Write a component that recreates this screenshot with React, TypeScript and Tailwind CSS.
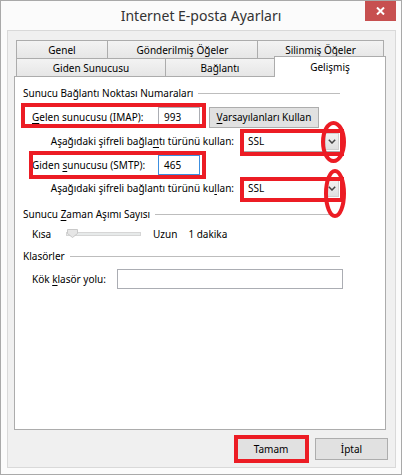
import React from 'react';

const U = ({ children }: { children: React.ReactNode }) => (
  <span className="underline underline-offset-[2px] decoration-[1px]">{children}</span>
);

const Tab = ({ label, w, last }: { label: string; w: string; last?: boolean }) => (
  <div
    className={`${w} h-[18px] border-t border-l border-[#acacac] ${last ? 'border-r' : ''} bg-gradient-to-b from-[#f3f3f3] to-[#e6e6e6] flex items-center justify-center leading-none whitespace-nowrap`}
  >
    {label}
  </div>
);

const Dropdown = () => (
  <div className="w-[98px] h-[21px] border border-[#acacac] bg-white flex items-center justify-between pl-[4px] pr-[1px]">
    <span>SSL</span>
    <div className="w-[14px] h-[17px] bg-gradient-to-b from-[#f2f2f2] to-[#e0e0e0] border border-[#d0d0d0] flex items-center justify-center">
      <svg width="8" height="5" viewBox="0 0 8 5">
        <path d="M0.8 0.8 L4 4 L7.2 0.8" fill="none" stroke="#444" strokeWidth="1.5" />
      </svg>
    </div>
  </div>
);

const GroupHeader = ({ children, className }: { children: React.ReactNode; className: string }) => (
  <div className={`${className} flex items-center h-[16px] w-[317px]`}>
    <span className="whitespace-nowrap">{children}</span>
    <div className="flex-1 h-px bg-[#bdbdbd] ml-[5px]" />
  </div>
);

export default function App() {
  return (
    <div className="relative w-[402px] h-[475px] border border-[#a9a9a9] bg-[#fbfbfb] flex flex-col overflow-hidden font-['Noto_Sans',sans-serif] text-[10px] text-black">
      {/* title bar */}
      <div className="relative h-[29px] flex items-center justify-center">
        <span className="text-[14px] text-[#333]">Internet E-posta Ayarları</span>
        <div className="absolute right-[5px] -top-px w-[31px] h-[21px] bg-[#c75050] flex items-center justify-center">
          <svg width="9" height="8" viewBox="0 0 9 8">
            <path d="M1 0.5 L8 7.5 M8 0.5 L1 7.5" stroke="white" strokeWidth="2" />
          </svg>
        </div>
      </div>

      {/* client area */}
      <div className="flex-1 ml-[6px] mr-[5px] mb-[6px] border border-[#d9d9d9] bg-[#f0f0f0] flex flex-col pt-[9px]">
        {/* tabs */}
        <div className="ml-[8px] flex">
          <Tab label="Genel" w="w-[91px]" />
          <Tab label="Gönderilmiş Öğeler" w="w-[150px]" />
          <Tab label="Silinmiş Öğeler" w="w-[127px]" last />
        </div>
        <div className="ml-[8px] flex items-start">
          <Tab label="Giden Sunucusu" w="w-[149px]" />
          <Tab label="Bağlantı" w="w-[109px]" />
          <div className="relative z-10 w-[112px] h-[21px] -mt-[2px] -mb-[1px] border-t border-l border-r border-[#acacac] bg-white flex items-center justify-center leading-none">
            Gelişmiş
          </div>
        </div>

        {/* panel */}
        <div className="ml-[6px] w-[372px] h-[354px] border border-[#acacac] bg-white pl-[8px] pt-[8px] flex flex-col whitespace-nowrap">
          <GroupHeader className="">Sunucu Bağlantı Noktası Numaraları</GroupHeader>

          <div className="mt-[6px] ml-[9px] flex items-center h-[20px]">
            <span className="w-[126px]">
              <U>G</U>elen sunucusu (IMAP):
            </span>
            <div className="w-[42px] h-[20px] border border-[#abadb3] bg-white flex items-center pl-[5px]">993</div>
            <button className="ml-[9px] w-[110px] h-[21px] border border-[#adadad] bg-[#e1e1e1] flex items-center justify-center">
              <span>
                <U>V</U>arsayılanları Kullan
              </span>
            </button>
          </div>

          <div className="mt-[4px] w-[318px] flex items-center justify-end h-[21px]">
            <span className="mr-[9px]">
              Aşağıdaki şifreli bağla<U>n</U>tı türünü kullan:
            </span>
            <Dropdown />
          </div>

          <div className="mt-[3px] ml-[9px] flex items-center h-[20px]">
            <span className="w-[126px]">
              Giden <U>s</U>unucusu (SMTP):
            </span>
            <div className="w-[42px] h-[20px] border border-[#3c8fe0] bg-white flex items-center pl-[5px]">465</div>
          </div>

          <div className="mt-[3px] w-[318px] flex items-center justify-end h-[21px]">
            <span className="mr-[9px]">
              Aşağıdaki şifreli bağlantı türünü ku<U>l</U>lan:
            </span>
            <Dropdown />
          </div>

          <GroupHeader className="mt-[7px]">
            Sunucu <U>Z</U>aman Aşımı Sayısı
          </GroupHeader>

          <div className="mt-[4px] ml-[9px] flex items-center h-[16px]">
            <span className="w-[34px]">Kısa</span>
            <div className="relative w-[75px] h-[8px] flex items-center">
              <div className="w-full h-[4px] bg-[#e7eaea] border border-[#d6d6d6]" />
              <svg className="absolute left-[1px] -top-[1px]" width="11" height="9" viewBox="0 0 11 9">
                <path d="M0.5 0.5 H10.5 V4.5 L5.5 8.5 L0.5 4.5 Z" fill="#e6e6e6" stroke="#c9c9c9" />
              </svg>
            </div>
            <span className="ml-[12px]">Uzun</span>
            <span className="ml-[11px]">1 dakika</span>
          </div>

          <GroupHeader className="mt-[6px]">Klasörler</GroupHeader>

          <div className="mt-[5px] ml-[9px] flex items-center h-[20px]">
            <span className="w-[85px]">
              Kök <U>k</U>lasör yolu:
            </span>
            <div className="w-[226px] h-[20px] border border-[#abadb3] bg-white" />
          </div>
        </div>

        {/* buttons */}
        <div className="mt-[8px] flex justify-end gap-[8px] pr-[7px]">
          <button className="w-[72px] h-[22px] border border-[#3c8fe0] bg-[#e1e1e1] flex items-center justify-center">
            Tamam
          </button>
          <button className="w-[73px] h-[22px] border border-[#adadad] bg-[#e1e1e1] flex items-center justify-center">
            İptal
          </button>
        </div>
      </div>

      {/* red annotations */}
      <div className="absolute left-[20px] top-[102px] w-[185px] h-[25px] border-[4px] border-[#ec1c24]" />
      <div className="absolute left-[28px] top-[150px] w-[177px] h-[28px] border-[4px] border-[#ec1c24]" />
      <div className="absolute left-[239px] top-[128px] w-[104px] h-[27px] border-[4px] border-[#ec1c24]" />
      <div className="absolute left-[239px] top-[176px] w-[104px] h-[25px] border-[4px] border-[#ec1c24]" />
      <div className="absolute left-[233px] top-[434px] w-[75px] h-[28px] border-[4px] border-[#ec1c24]" />
      <svg className="absolute left-0 top-0 pointer-events-none" width="402" height="475">
        <ellipse cx="332.5" cy="141" rx="10.5" ry="19" fill="none" stroke="#ec1c24" strokeWidth="4" />
        <ellipse cx="334" cy="192.5" rx="9" ry="22.5" fill="none" stroke="#ec1c24" strokeWidth="4" />
      </svg>
    </div>
  );
}
